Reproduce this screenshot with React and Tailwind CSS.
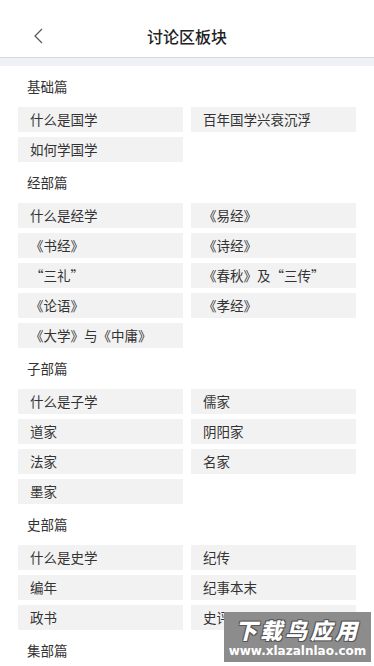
import React from "react";

const sections = [
  { title: "基础篇", items: ["什么是国学", "百年国学兴衰沉浮", "如何学国学"] },
  { title: "经部篇", items: ["什么是经学", "《易经》", "《书经》", "《诗经》", "“三礼”", "《春秋》及“三传”", "《论语》", "《孝经》", "《大学》与《中庸》"] },
  { title: "子部篇", items: ["什么是子学", "儒家", "道家", "阴阳家", "法家", "名家", "墨家"] },
  { title: "史部篇", items: ["什么是史学", "纪传", "编年", "纪事本末", "政书", "史评"] },
  { title: "集部篇", items: [] },
];

export default function App() {
  return (
    <div
      className="relative w-[374px] h-[666px] overflow-hidden bg-white text-[#333]"
      style={{ fontFamily: '"Noto Sans CJK SC", "Noto Sans", sans-serif' }}
    >
      <div className="h-[58px] flex items-end border-b border-[#d6d6d6] relative">
        <div className="h-[42px] w-full flex items-center justify-center relative">
          <svg className="absolute left-[32px] top-[13px]" width="12" height="16" viewBox="0 0 12 16">
            <path d="M10 1 L3 8 L10 15" fill="none" stroke="#555" strokeWidth="1.2" />
          </svg>
          <span className="text-[16px] font-medium text-[#222]">讨论区板块</span>
        </div>
      </div>
      <div className="h-[8px] bg-[#eef1f5]" />
      <div>
        {sections.map((s) => (
          <div key={s.title}>
            <div className="h-[41px] flex items-center pl-[27px] text-[13.5px] text-[#333] leading-none">{s.title}</div>
            {s.items.length > 0 && (
              <div className="grid grid-cols-[165px_165px] gap-x-[8px] gap-y-[5px] pl-[18px]">
                {s.items.map((it, i) => (
                  <div key={i} className="h-[25px] bg-[#f2f2f2] flex items-center pl-[12px] text-[13.5px] leading-none text-[#333]">
                    {it}
                  </div>
                ))}
              </div>
            )}
          </div>
        ))}
      </div>
      <div className="absolute left-[224px] top-[612px] w-[147px] h-[50px] bg-[#8c8c8c] flex flex-col items-center justify-center gap-[5px]">
        <div
          className="text-[22px] font-black italic text-white leading-none tracking-[3px]"
          style={{ textShadow: "1px 1px 0 #555, -1px -1px 0 #555, 1px -1px 0 #555, -1px 1px 0 #555" }}
        >
          下载鸟应用
        </div>
        <div className="text-[12px] font-bold text-white leading-none" style={{ fontFamily: "'DejaVu Sans', sans-serif" }}>
          www.xlazalnlao.com
        </div>
      </div>
    </div>
  );
}
